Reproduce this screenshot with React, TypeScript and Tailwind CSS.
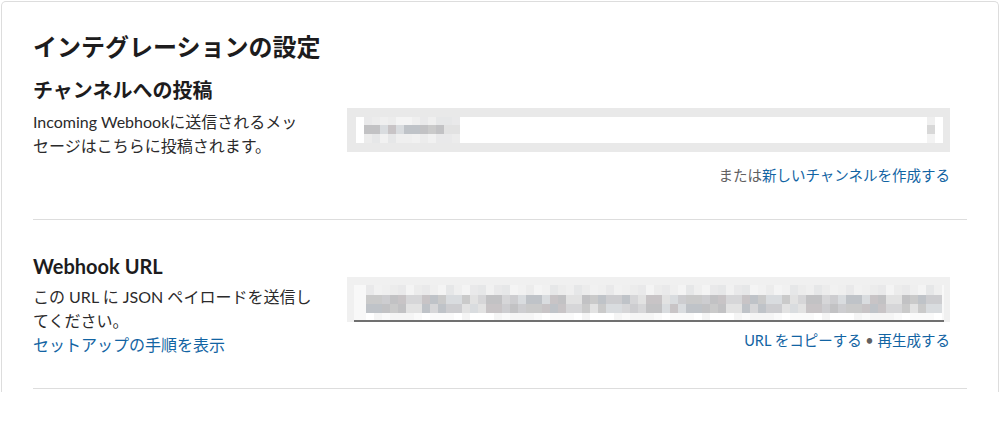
const darkShades = [
  'bg-[#c2c2c4]',
  'bg-[#cdcdd0]',
  'bg-[#d6d6d8]',
  'bg-[#bfc3c8]',
  'bg-[#c8c4c6]',
  'bg-[#d9dcdf]',
  'bg-[#e2e2e2]',
  'bg-[#cacaca]',
];

const lightShades = [
  'bg-[#ececec]',
  'bg-[#f1f1f1]',
  'bg-[#e6e7e8]',
  'bg-[#f4f4f4]',
  'bg-[#e9e9ea]',
  'bg-[#efefef]',
];

// deterministic "blurred text" cells
function shadeRow(count: number, seed: number, palette: string[]) {
  return Array.from({ length: count }, (_, i) => palette[(i * 7 + seed * 3 + ((i * i + seed) % 5)) % palette.length]);
}

function Mosaic({ rows, heights }: { rows: string[][]; heights: string[] }) {
  return (
    <div className="flex flex-col">
      {rows.map((row, r) => (
        <div key={r} className={`flex ${heights[r]}`}>
          {row.map((c, i) => (
            <div key={i} className={`w-[8px] shrink-0 ${c}`} />
          ))}
        </div>
      ))}
    </div>
  );
}

function ChannelInput() {
  return (
    <div className="h-[44px] bg-[#e9e9e9] pl-[9px] pr-[7px] py-[9px]">
      <div className="h-[26px] bg-white flex justify-between pl-[8px] pr-[8px]">
        <Mosaic
          rows={[shadeRow(12, 1, lightShades), shadeRow(12, 2, darkShades), shadeRow(12, 3, lightShades)]}
          heights={['h-[8px]', 'h-[9px]', 'h-[9px]']}
        />
        <Mosaic
          rows={[['bg-[#efefef]'], ['bg-[#d8d8d8]'], ['bg-[#f3f3f3]']]}
          heights={['h-[8px]', 'h-[9px]', 'h-[9px]']}
        />
      </div>
    </div>
  );
}

function UrlInput() {
  return (
    <div className="h-[45px] bg-[#f0f0f0] pt-[8px] pl-[7px] pr-[6px]">
      <div className="h-[37px] bg-[#f8f8f8] border-b-2 border-[#707070] pl-[12px] pr-[8px] overflow-hidden">
        <Mosaic
          rows={[shadeRow(72, 4, lightShades), shadeRow(72, 5, darkShades), shadeRow(72, 6, darkShades), shadeRow(72, 7, ['bg-[#fafafa]', 'bg-[#f5f5f5]', 'bg-white'])]}
          heights={['h-[10px]', 'h-[9px]', 'h-[9px]', 'h-[7px]']}
        />
      </div>
    </div>
  );
}

export default function App() {
  return (
    <div className="min-h-screen bg-white font-['Lato','Noto_Sans_CJK_JP',sans-serif] text-[#1d1c1d]">
      <div className="mx-px mt-px h-[391px] overflow-hidden rounded-t-[5px] border-x border-t border-[#dddddd] px-[31px] pt-[29px]">
        <h1 className="text-[24px] leading-[32px] font-bold">インテグレーションの設定</h1>

        <section className="flex items-start pt-[13px] pb-[33px] border-b border-[#dddddd]">
          <div className="w-[278.5px] mr-[35.5px] shrink-0">
            <h2 className="text-[20px] leading-[28px] font-bold mb-[6px]">チャンネルへの投稿</h2>
            <p className="text-[16px] leading-[24px] text-[#2b2a2b]">
              Incoming Webhookに送信されるメッセージはこちらに投稿されます。
            </p>
          </div>
          <div className="flex-1 min-w-0 mt-[32px] pr-[17px]">
            <ChannelInput />
            <p className="mt-[14px] text-right text-[14.5px] leading-[20px] text-[#616061]">
              または<a className="text-[#1264a3]">新しいチャンネルを作成する</a>
            </p>
          </div>
        </section>

        <section className="flex items-start pt-[32px] pb-[31px] border-b border-[#dddddd]">
          <div className="w-[278.5px] mr-[35.5px] shrink-0">
            <h2 className="text-[20px] leading-[28px] font-bold mb-[5px]">Webhook URL</h2>
            <p className="text-[16px] leading-[24px] text-[#2b2a2b]">
              この URL に JSON ペイロードを送信してください。
            </p>
            <a className="block text-[16px] leading-[24px] text-[#1264a3]">セットアップの手順を表示</a>
          </div>
          <div className="flex-1 min-w-0 mt-[25px] pr-[17px]">
            <UrlInput />
            <p className="mt-[9px] text-right text-[14.5px] leading-[20px] text-[#616061]">
              <a className="text-[#1264a3]">URL をコピーする</a> • <a className="text-[#1264a3]">再生成する</a>
            </p>
          </div>
        </section>
      </div>
    </div>
  );
}
